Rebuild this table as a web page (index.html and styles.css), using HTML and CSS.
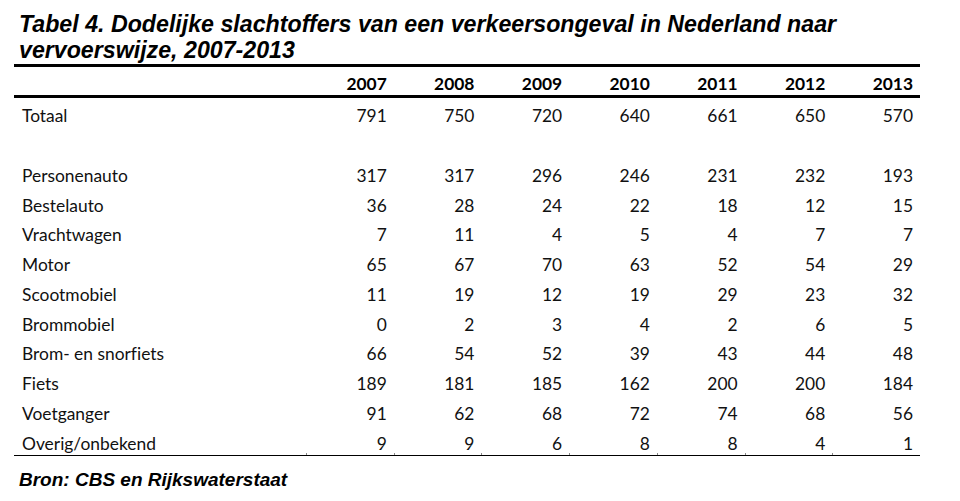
FILE: index.html
```html
<!DOCTYPE html>
<html lang="nl">
<head>
<meta charset="utf-8">
<title>Tabel 4</title>
<link rel="stylesheet" href="styles.css">
</head>
<body>
<h1 class="title">Tabel 4. Dodelijke slachtoffers van een verkeersongeval in Nederland naar<br>vervoerswijze, 2007-2013</h1>
<table class="data">
  <colgroup>
    <col class="c-label">
    <col class="c-num"><col class="c-num"><col class="c-num"><col class="c-num"><col class="c-num"><col class="c-num"><col class="c-num">
  </colgroup>
  <thead>
    <tr><th></th><th>2007</th><th>2008</th><th>2009</th><th>2010</th><th>2011</th><th>2012</th><th>2013</th></tr>
  </thead>
  <tbody>
    <tr><td>Totaal</td><td>791</td><td>750</td><td>720</td><td>640</td><td>661</td><td>650</td><td>570</td></tr>
    <tr><td></td><td></td><td></td><td></td><td></td><td></td><td></td><td></td></tr>
    <tr><td>Personenauto</td><td>317</td><td>317</td><td>296</td><td>246</td><td>231</td><td>232</td><td>193</td></tr>
    <tr><td>Bestelauto</td><td>36</td><td>28</td><td>24</td><td>22</td><td>18</td><td>12</td><td>15</td></tr>
    <tr><td>Vrachtwagen</td><td>7</td><td>11</td><td>4</td><td>5</td><td>4</td><td>7</td><td>7</td></tr>
    <tr><td>Motor</td><td>65</td><td>67</td><td>70</td><td>63</td><td>52</td><td>54</td><td>29</td></tr>
    <tr><td>Scootmobiel</td><td>11</td><td>19</td><td>12</td><td>19</td><td>29</td><td>23</td><td>32</td></tr>
    <tr><td>Brommobiel</td><td>0</td><td>2</td><td>3</td><td>4</td><td>2</td><td>6</td><td>5</td></tr>
    <tr><td>Brom- en snorfiets</td><td>66</td><td>54</td><td>52</td><td>39</td><td>43</td><td>44</td><td>48</td></tr>
    <tr><td>Fiets</td><td>189</td><td>181</td><td>185</td><td>162</td><td>200</td><td>200</td><td>184</td></tr>
    <tr><td>Voetganger</td><td>91</td><td>62</td><td>68</td><td>72</td><td>74</td><td>68</td><td>56</td></tr>
    <tr class="last"><td>Overig/onbekend</td><td>9</td><td>9</td><td>6</td><td>8</td><td>8</td><td>4</td><td>1</td></tr>
  </tbody>
</table>
<p class="source">Bron: CBS en Rijkswaterstaat</p>
</body>
</html>
```

FILE: styles.css
```css
html, body {
  margin: 0;
  padding: 0;
  background: #ffffff;
  color: #000000;
}

body {
  width: 960px;
  height: 501px;
  overflow: hidden;
}

.title {
  margin: 0;
  padding: 11px 0 0 19px;
  height: 52px;
  font-family: "Liberation Sans", Arial, sans-serif;
  font-weight: bold;
  font-style: italic;
  font-size: 23.2px;
  line-height: 26px;
  color: #000;
}

.data {
  margin: 1px 0 0 14px;
  width: 906px;
  border-collapse: collapse;
  table-layout: fixed;
  font-family: Lato, "Open Sans", sans-serif;
  font-size: 17.4px;
  font-variant-ligatures: none;
  font-feature-settings: "liga" 0;
  border-top: 3px solid #000;
  border-bottom: 1px solid #000;
  color: #111;
}

.c-label { width: 292px; }
.c-num { width: 87.7px; }

.data th,
.data td {
  padding: 0 7px 0 8px;
  text-align: right;
  white-space: nowrap;
}

.data th {
  font-weight: bold;
  height: 24px;
  padding-top: 4px;
  border-bottom: 3px solid #000;
  vertical-align: middle;
  color: #000;
}

.data td {
  height: 23.75px;
  padding-top: 6px;
  vertical-align: middle;
}

.data td:first-child {
  text-align: left;
}

.data .last td + td {
  background: linear-gradient(#888, #888) left bottom / 1px 2px no-repeat;
}

.source {
  margin: 0;
  padding: 13px 0 0 19px;
  font-family: "Liberation Sans", Arial, sans-serif;
  font-weight: bold;
  font-style: italic;
  font-size: 19px;
  line-height: 22px;
  color: #000;
}
```
